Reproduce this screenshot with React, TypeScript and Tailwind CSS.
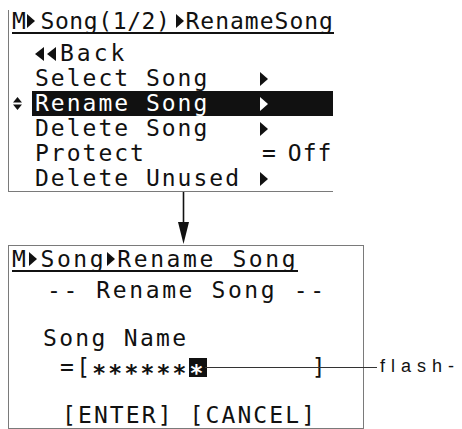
import React from "react";

// --- Data ---
const menuRows = [
  { label: "Back", kind: "back" },
  { label: "Select Song", kind: "arrow" },
  { label: "Rename Song", kind: "arrow", active: true },
  { label: "Delete Song", kind: "arrow" },
  { label: "Protect", kind: "value", value: "Off" },
  { label: "Delete Unused", kind: "arrow" },
];

// --- Glyphs ---
function TriRight({ className = "" }: { className?: string }) {
  return (
    <svg width="8" height="14" viewBox="0 0 8 14" className={className}>
      <path d="M0 0 L8 7 L0 14 Z" fill="currentColor" />
    </svg>
  );
}

function TriLeft({ className = "" }: { className?: string }) {
  return (
    <svg width="9" height="14" viewBox="0 0 9 14" className={className}>
      <path d="M9 0 L0 7 L9 14 Z" fill="currentColor" />
    </svg>
  );
}

function UpDown() {
  return (
    <svg width="9" height="13" viewBox="0 0 9 13" className="ml-[4px]">
      <path d="M0 5.5 L4.5 0 L9 5.5 Z" fill="#111" />
      <path d="M0 7.5 L9 7.5 L4.5 13 Z" fill="#111" />
    </svg>
  );
}

// --- Screens ---
function MenuScreen() {
  return (
    <div className="mt-[10px] ml-[8px] w-[325px] border-b border-l border-[#7a7a7a]">
      <div className="flex">
        <div className="ml-[3px] flex items-center whitespace-nowrap border-b-2 border-[#111] leading-[22px] tracking-[0.6px]">
          <span>M</span>
          <TriRight className="ml-[1px]" />
          <span className="ml-[5px]">Song(1/2)</span>
          <TriRight className="ml-[6px]" />
          <span className="ml-[1px] tracking-[1px]">RenameSong</span>
        </div>
      </div>

      <div className="mt-[7px] flex flex-col">
        {menuRows.map((row) => (
          <div key={row.label} className="flex h-[25px] items-center leading-[25px]">
            <div className="flex w-[23px] items-center">{row.active && <UpDown />}</div>
            <div
              className={`flex h-full flex-1 items-center pl-[3px] tracking-[2px] ${
                row.active ? "bg-[#111] text-white" : "text-[#111]"
              }`}
            >
              {row.kind === "back" ? (
                <div className="flex items-center">
                  <TriLeft />
                  <TriLeft className="ml-[3px]" />
                  <span className="ml-[4px] tracking-[3px]">Back</span>
                </div>
              ) : (
                <>
                  <span className="w-[225px] whitespace-pre">{row.label}</span>
                  {row.kind === "arrow" ? (
                    <TriRight />
                  ) : (
                    <span className="flex whitespace-pre">
                      <span className="ml-[2px]">=</span>
                      <span className="ml-[10px] tracking-[1px]">{row.value}</span>
                    </span>
                  )}
                </>
              )}
            </div>
          </div>
        ))}
      </div>
    </div>
  );
}

function RenameScreen() {
  return (
    <div className="ml-[8px] flex h-[184px] w-[356px] flex-col border border-[#7a7a7a] text-[#111]">
      <div className="flex pt-[2px]">
        <div className="ml-[3px] flex items-center whitespace-nowrap border-b-2 border-[#111] leading-[22px] tracking-[2.6px]">
          <span>M</span>
          <TriRight className="ml-[1px]" />
          <span className="ml-[3px]">Song</span>
          <TriRight className="ml-[1px]" />
          <span className="ml-[2px] whitespace-pre">Rename Song</span>
        </div>
      </div>
      <div className="mt-[6px] whitespace-pre pl-[38px] leading-[25px] tracking-[2.6px]">-- Rename Song --</div>
      <div className="mt-[23px] whitespace-pre pl-[34px] leading-[25px] tracking-[2.3px]">Song Name</div>
      <div className="mt-[4px] flex h-[25px] w-[319px] items-center justify-between pl-[51px] leading-[25px] tracking-[2.3px]">
        <div className="flex items-center">
          <span>=[</span>
          <span className="relative top-[6px] font-bold tracking-[2.2px]">******</span>
          <span className="flex h-[19px] w-[18px] items-center justify-center bg-[#111] font-bold text-white">
            <span className="relative top-[6px]">*</span>
          </span>
        </div>
        <span>]</span>
      </div>
      <div className="mt-[23px] whitespace-pre pl-[53px] leading-[25px] tracking-[2.1px]">[ENTER] [CANCEL]</div>
    </div>
  );
}

export default function App() {
  return (
    <div
      className="relative h-[429px] w-[462px] overflow-hidden bg-white text-[23px] text-[#111]"
      style={{ fontFamily: '"DejaVu Sans Mono", monospace' }}
    >
      <MenuScreen />

      {/* flow arrow between the two screens */}
      <div className="flex h-[53px]">
        <svg width="11" height="53" viewBox="0 0 11 53" className="ml-[178px]">
          <line x1="5.5" y1="0" x2="5.5" y2="32" stroke="#111" strokeWidth="1.6" />
          <path d="M0 30 L11 30 L5.5 52 Z" fill="#111" />
        </svg>
      </div>

      <RenameScreen />

      {/* callout for the flashing cursor */}
      <div className="absolute left-[205px] top-[367px] h-px w-[172px] bg-[#333]" />
      <div
        className="absolute left-[380px] top-[357px] whitespace-nowrap text-[18px] leading-[18px] tracking-[6px] text-[#111]"
        style={{ fontFamily: '"Liberation Sans", Arial, sans-serif' }}
      >
        flash-
      </div>
    </div>
  );
}
